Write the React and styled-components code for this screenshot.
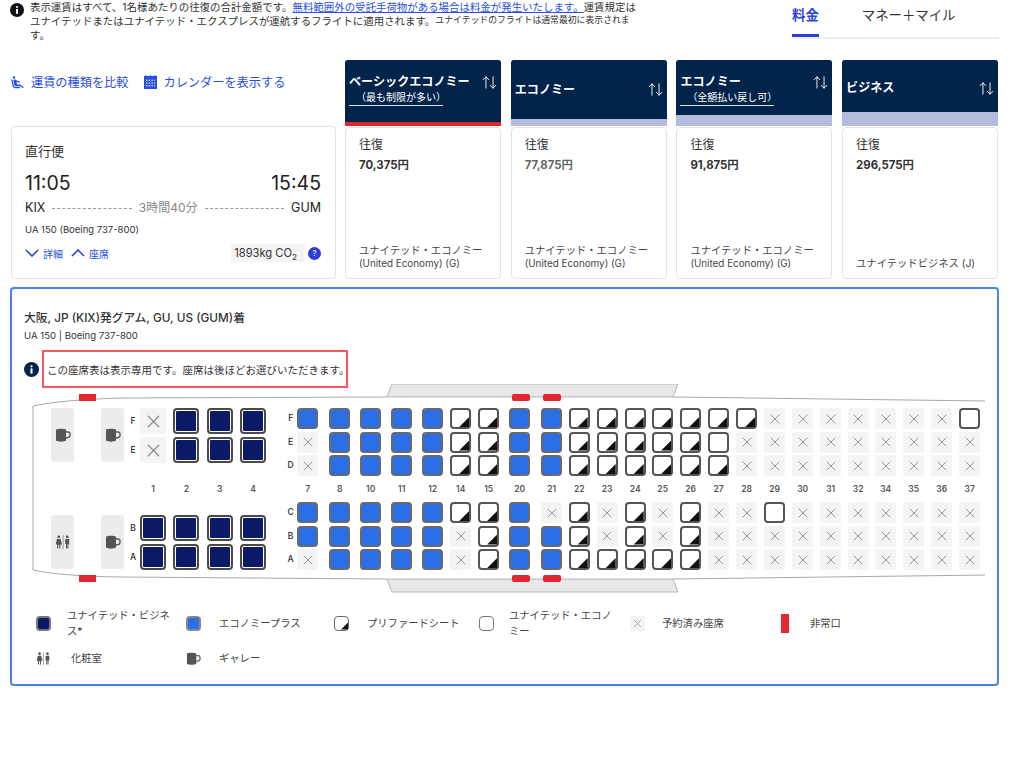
import React from "react";
import styled, { createGlobalStyle } from "styled-components";
import { MdAirlineSeatReclineExtra } from "react-icons/md";
import { ArrowUpDown, X } from "lucide-react";

const Global = createGlobalStyle`
  html, body { margin: 0; padding: 0; background: #fff; }
  body { font-family: Inter, "Noto Sans CJK JP", sans-serif; color: #333; width: 1024px; height: 768px; overflow: hidden; }
`;

const Page = styled.div`
  width: 989px;
  padding-left: 10px;
`;
const Top = styled.div`
  display: flex;
  justify-content: space-between;
  height: 60px;
`;
const Notice = styled.div`
  display: flex;
  gap: 6px;
  width: 640px;
  padding-top: 1px;
  font-size: 10.45px;
  line-height: 14px;
  color: #333;
`;
const NoticeIcon = styled.svg`
  flex: none;
  width: 14px;
  height: 14px;
  margin-top: 2px;
`;
const NoticeLink = styled.a`
  color: #2a4fe0;
  text-decoration: underline;
`;
const SmallNote = styled.span`
  font-size: 8.85px;
  line-height: 0;
  vertical-align: 2.5px;
`;
const Tabs = styled.div`
  display: flex;
  width: 207px;
  height: 37px;
  gap: 43px;
  border-bottom: 2px solid #eeeef0;
`;
const Tab = styled.div`
  font-size: 13.4px;
  line-height: 30px;
  height: 37px;
  box-sizing: border-box;
  color: ${p => (p.$active ? "#2a45d8" : "#333")};
  font-weight: ${p => (p.$active ? 600 : 400)};
  border-bottom: ${p => (p.$active ? "3px solid #2a3fd8" : "none")};
`;
const Middle = styled.div`
  display: flex;
  gap: 10px;
`;
const LeftCol = styled.div`
  width: 325px;
  margin-left: 1px;
  flex: none;
  margin-right: -1px;
`;
const Links = styled.div`
  height: 66px;
  display: flex;
  align-items: center;
  padding-bottom: 22px;
  box-sizing: border-box;
  margin-left: -1px;
`;
const TopLink = styled.a`
  display: flex;
  align-items: center;
  gap: 6px;
  font-size: 12.2px;
  color: #2a4fe0;
  margin-right: 14px;
`;
const FlightCard = styled.div`
  box-sizing: border-box;
  height: 153px;
  border: 1px solid #e3e4e8;
  border-radius: 4px;
  padding: 15px 14px 0 13px;
  box-shadow: 0 0 2px rgba(0, 0, 0, 0.06);
`;
const CardTitle = styled.div`
  font-size: 13px;
  line-height: 18px;
`;
const RouteLine = styled.div`
  display: flex;
  justify-content: space-between;
  align-items: center;
`;
const Times = styled(RouteLine)`
  font-size: 19.5px;
  line-height: 24px;
  margin-top: 11px;
  color: #222;
`;
const Airports = styled(RouteLine)`
  font-size: 12.5px;
  line-height: 16px;
  margin-top: 5px;
  color: #222;
  gap: 7px;
`;
const Dash = styled.div`
  flex: 1;
  border-top: 1px dashed #999;
`;
const Duration = styled.span`
  font-size: 12px;
  color: #888;
`;
const Aircraft = styled.div`
  font-size: 9.5px;
  line-height: 14px;
  margin-top: 7px;
`;
const CardBottom = styled(RouteLine)`
  margin-top: 7px;
`;
const DetailLinks = styled.div`
  display: flex;
  align-items: center;
  gap: 8px;
`;
const DetailLink = styled.a`
  display: flex;
  align-items: center;
  gap: 4px;
  font-size: 10px;
  color: #2a4fe0;
`;
const Chevron = styled.svg`
  width: 14px;
  height: 8px;
  fill: none;
  stroke: #2a45d8;
  stroke-width: 1.6;
`;
const Co2Wrap = styled.div`
  display: flex;
  align-items: center;
  gap: 4px;
`;
const Co2 = styled.div`
  background: #f4f4f4;
  font-size: 11.2px;
  line-height: 18px;
  padding: 0 7px 0 3px;
  color: #333;
  white-space: nowrap;
  sub { font-size: 8px; line-height: 0; }
`;
const Help = styled.div`
  width: 13px;
  height: 13px;
  border-radius: 50%;
  background: #2f3fd6;
  color: #fff;
  font-size: 8px;
  line-height: 13px;
  text-align: center;
`;
const Fares = styled.div`
  flex: 1;
  display: grid;
  grid-template-columns: repeat(4, 156px);
  column-gap: 9.7px;
`;
const FareCol = styled.div`
  display: flex;
  flex-direction: column;
`;
const FareHead = styled.div`
  height: 66px;
  background: #b4bbdf;
  border-radius: 3px 3px 0 0;
  overflow: hidden;
  display: flex;
  flex-direction: column;
`;
const FareTop = styled.div`
  height: ${p => p.$h}px;
  background: #02234a;
  color: #fff;
  display: flex;
  justify-content: space-between;
  align-items: ${p => (p.$sub ? "flex-start" : "center")};
  padding: ${p => p.$pt}px 3px 0 4px;
  box-sizing: border-box;
`;
const RedLine = styled.div`
  height: 4px;
  background: #e0252f;
`;
const FareName = styled.div`
  font-size: 12.1px;
  font-weight: 700;
  line-height: 16px;
`;
const FareSub = styled.div`
  font-size: 10px;
  font-weight: 400;
  line-height: 13px;
  padding: 1px 0 1px 7px;
  border-bottom: 1px solid #ddd;
  width: 87px;
`;
const FareBody = styled.div`
  box-sizing: border-box;
  height: 152px;
  margin-top: 1px;
  border: 1px solid #e3e4e8;
  border-radius: 4px;
  padding: 9px 13px 8px 13px;
  display: flex;
  flex-direction: column;
`;
const Trip = styled.div`
  font-size: 12px;
  line-height: 16px;
`;
const Price = styled.div`
  font-size: 11.4px;
  font-weight: 700;
  line-height: 14px;
  margin-top: 5px;
  color: ${p => (p.$muted ? "#666" : "#333")};
`;
const Cabin = styled.div`
  margin-top: auto;
  font-size: 10.3px;
  line-height: 13px;
  color: #444;
  white-space: nowrap;
`;
const CabinCode = styled.div`
  font-size: 9.85px;
`;
const Panel = styled.div`
  box-sizing: border-box;
  height: 399px;
  margin-top: 8px;
  border: 2px solid #4c80ea;
  border-radius: 4px;
`;
const PanelTitle = styled.div`
  font-size: 11.8px;
  font-weight: 500;
  line-height: 16px;
  padding: 21px 0 0 12px;
`;
const PanelSub = styled.div`
  font-size: 9.6px;
  line-height: 14px;
  padding: 3px 0 0 12px;
`;
const InfoRow = styled.div`
  display: flex;
  align-items: center;
  margin: 7px 0 0 12px;
`;
const InfoDot = styled.svg`
  width: 15px;
  height: 15px;
  flex: none;
  margin-right: 4px;
`;
const Callout = styled.div`
  box-sizing: border-box;
  width: 306px;
  height: 38px;
  border: 2px solid #f55a5f;
  padding-left: 3px;
  margin-left: -1px;
  display: flex;
  align-items: center;
  font-size: 10.5px;
  color: #333;
  white-space: nowrap;
`;
const Deck = styled.div`
  position: relative;
  height: 208px;
  margin-top: -4px;
  display: flex;
  padding: 24px 0 0 39px;
  box-sizing: border-box;
`;
const Hull = styled.svg`
  position: absolute;
  left: 0;
  top: 0;
  width: 985px;
  height: 210px;
  z-index: 0;
`;
const Exit = styled.div`
  position: absolute;
  z-index: 1;
  left: ${p => p.$x}px;
  top: ${p => p.$y}px;
  width: ${p => p.$w}px;
  height: 7px;
  border-radius: ${p => (p.$round ? "2px" : "0")};
  background: #e3262f;
`;
const CabinColumn = styled.div`
  position: relative;
  z-index: 1;
  display: flex;
  flex-direction: column;
  width: ${p => p.$w}px;
  margin-left: ${p => p.$ml}px;
  flex: none;
  align-items: center;
`;
const Stack = styled.div`
  display: flex;
  flex-direction: column;
  align-items: center;
  gap: ${p => p.$gap}px;
`;
const NumberCell = styled.div`
  height: ${p => p.$h}px;
  display: flex;
  align-items: center;
  justify-content: center;
  font-size: 8.5px;
  font-weight: 600;
  color: #555;
`;
const RowLetter = styled.div`
  height: ${p => p.$s}px;
  line-height: ${p => p.$s}px;
  font-size: 8.5px;
  font-weight: 600;
  color: #444;
`;
const Facility = styled.div`
  box-sizing: border-box;
  width: 23px;
  height: 54px;
  border-radius: 3px;
  background: #ececec;
  display: flex;
  align-items: center;
  justify-content: center;
`;
const FacilityGap = styled.div`
  height: 53px;
`;
const Seat = styled.div`
  box-sizing: border-box;
  position: relative;
  width: ${p => p.$s}px;
  height: ${p => p.$s}px;
  border-radius: 4px;
  display: flex;
  align-items: center;
  justify-content: center;
  ${p => p.$k === "B" && "border:2px solid #4a4a4a;padding:1px;background:#0a1a66 content-box;"}
  ${p => p.$k === "P" && "border:2px solid #666a70;background:#2a6fe8;"}
  ${p => (p.$k === "R" || p.$k === "O") && "border:2px solid #555;background:#fff;"}
  ${p => p.$k === "X" && "background:#f4f4f4;border-radius:2px;color:#8c8c8c;"}
  ${p =>
    p.$k === "R" &&
    `&::after{content:"";position:absolute;right:0;bottom:0;width:${Math.round(p.$s * 0.48)}px;height:${Math.round(
      p.$s * 0.48
    )}px;background:#111;clip-path:polygon(100% 0,100% 100%,0 100%);}`}
`;
const Swatch = styled(Seat)`
  ${p => p.$k === "B" && "padding:0;background:#0a1a66;border-color:#777;"}
  ${p => p.$k === "P" && "border-color:#888;"}
  ${p => (p.$k === "R" || p.$k === "O") && "border:1px solid #666;"}
  ${p => p.$k === "O" && "border-color:#777;"}
`;
const Legend = styled.div`
  display: grid;
  grid-template-columns: 150px 148px 145px 151px 147px auto;
  grid-auto-rows: 34px;
  padding: 14px 0 0 24px;
  row-gap: 1px;
`;
const LegendItem = styled.div`
  display: flex;
  align-items: center;
  gap: ${p => p.$gap || 16}px;
  font-size: 10.3px;
  line-height: 16px;
  color: #444;
`;
const LegendLabel = styled.div`
  width: 105px;
`;
const IconBox = styled.div`
  width: 15px;
  flex: none;
  display: flex;
  justify-content: center;
`;
const ExitMark = styled.div`
  width: 8px;
  height: 19px;
  background: #e3262f;
`;

function Mug({ size = 16 }) {
  return (
    <svg width={size} height={size} viewBox="0 0 16 16">
      <path d="M1 2.5C3 1.5 9 1.5 11 2.5V13.5C9 15 3 15 1 13.5Z" fill="#555" />
      <path d="M11 5H13A2 2 0 0 1 15 7V8.5A2 2 0 0 1 13 10.5L11 11" fill="none" stroke="#555" strokeWidth="1.3" />
    </svg>
  );
}
function Lav({ size = 16 }) {
  return (
    <svg width={size} height={size} viewBox="0 0 16 16" fill="#555">
      <circle cx="3.8" cy="2.8" r="1.4" />
      <path d="M2 5H5.6L7 10.5H5.4V14.5H4.3V11H3.3V14.5H2.2V10.5H.6Z" />
      <rect x="7.8" y="1" width=".5" height="14" />
      <circle cx="12.2" cy="2.8" r="1.4" />
      <path d="M10.2 5H14.2V10H13.4V14.5H12.4V10.5H12V14.5H11V10H10.2Z" />
    </svg>
  );
}

const economy = [
  ["7", 308, "PXX", "PPX"],
  ["8", 340, "PPP", "PPP"],
  ["10", 371, "PPP", "PPP"],
  ["11", 402, "PPP", "PPP"],
  ["12", 433, "PPP", "PPP"],
  ["14", 461, "RRR", "RXX"],
  ["15", 489, "RRR", "RRR"],
  ["20", 520, "PPP", "PPP"],
  ["21", 552, "PPP", "XPP"],
  ["22", 579.5, "RRR", "RRR"],
  ["23", 607.5, "RRR", "XXR"],
  ["24", 635.5, "RRR", "RRR"],
  ["25", 663, "RRR", "XXR"],
  ["26", 691, "RRR", "RRR"],
  ["27", 719, "ROR", "XXX"],
  ["28", 747, "RXX", "XXX"],
  ["29", 775, "XXX", "OXX"],
  ["30", 803, "XXX", "XXX"],
  ["31", 831, "XXX", "XXX"],
  ["32", 858.5, "XXX", "XXX"],
  ["34", 886, "XXX", "XXX"],
  ["35", 914, "XXX", "XXX"],
  ["36", 942, "XXX", "XXX"],
  ["37", 970, "OXX", "XXX"],
];
const business = [
  ["1", "XX", "BB"],
  ["2", "BB", "BB"],
  ["3", "BB", "BB"],
  ["4", "BB", "BB"],
];

const crossSize = { 26: 21, 21: 16, 15: 13 };

const SeatCell = ({ k, s }) => (
  <Seat $k={k} $s={s}>
    {k === "X" && <X size={crossSize[s]} strokeWidth={1.35} />}
  </Seat>
);

const fares = [
  { name: "ベーシックエコノミー", sub: "（最も制限が多い）", h: 62, pt: 14, red: true, price: "70,375円", c1: "ユナイテッド・エコノミー", c2: "(United Economy) (G)" },
  { name: "エコノミー", h: 59, pt: 0, price: "77,875円", muted: true, c1: "ユナイテッド・エコノミー", c2: "(United Economy) (G)" },
  { name: "エコノミー", sub: "（全額払い戻し可）", h: 55, pt: 14, price: "91,875円", c1: "ユナイテッド・エコノミー", c2: "(United Economy) (G)" },
  { name: "ビジネス", h: 52, pt: 4, price: "296,575円", c1: "ユナイテッドビジネス (J)" },
];

const Info = ({ as: C, fill }) => (
  <C viewBox="0 0 16 16">
    <circle cx="8" cy="8" r="8" fill={fill} />
    <circle cx="8" cy="4.6" r="1.2" fill="#fff" />
    <rect x="6.9" y="6.8" width="2.2" height="5.6" fill="#fff" />
  </C>
);

export default function App() {
  return (
    <Page>
      <Global />
      <Top>
        <Notice>
          <Info as={NoticeIcon} fill="#111" />
          <div>
            表示運賃はすべて、1名様あたりの往復の合計金額です。
            <NoticeLink>無料範囲外の受託手荷物がある場合は料金が発生いたします。</NoticeLink>
            運賃規定は
            <br />
            ユナイテッドまたはユナイテッド・エクスプレスが運航するフライトに適用されます。
            <SmallNote>ユナイテッドのフライトは通常最初に表示されま</SmallNote>
            <br />
            す。
          </div>
        </Notice>
        <Tabs>
          <Tab $active>料金</Tab>
          <Tab>マネー＋マイル</Tab>
        </Tabs>
      </Top>
      <Middle>
        <LeftCol>
          <Links>
            <TopLink>
              <MdAirlineSeatReclineExtra size={15} />
              運賃の種類を比較
            </TopLink>
            <TopLink>
              <svg width="15" height="15" viewBox="0 0 15 15">
                <rect x="1" y="1" width="13" height="13" fill="#2a4fe0" />
                <path d="M3 .2V2M7.5 .2V2M12 .2V2" stroke="#2a4fe0" strokeWidth="1.2" />
                <path d="M3 5.2H12M3 8H12M3 10.8H12" stroke="#fff" strokeWidth="1.1" strokeDasharray="1.5 1.2" />
              </svg>
              カレンダーを表示する
            </TopLink>
          </Links>
          <FlightCard>
            <CardTitle>直行便</CardTitle>
            <Times>
              <span>11:05</span>
              <span>15:45</span>
            </Times>
            <Airports>
              <span>KIX</span>
              <Dash />
              <Duration>3時間40分</Duration>
              <Dash />
              <span>GUM</span>
            </Airports>
            <Aircraft>UA 150 (Boeing 737-800)</Aircraft>
            <CardBottom>
              <DetailLinks>
                <DetailLink>
                  <Chevron viewBox="0 0 14 8"><path d="M1 1L7 7L13 1" /></Chevron>
                  詳細
                </DetailLink>
                <DetailLink>
                  <Chevron viewBox="0 0 14 8"><path d="M1 7L7 1L13 7" /></Chevron>
                  座席
                </DetailLink>
              </DetailLinks>
              <Co2Wrap>
                <Co2>
                  1893kg CO<sub>2</sub>
                </Co2>
                <Help>?</Help>
              </Co2Wrap>
            </CardBottom>
          </FlightCard>
        </LeftCol>
        <Fares>
          {fares.map((f, i) => (
            <FareCol key={i}>
              <FareHead>
                <FareTop $h={f.h} $sub={!!f.sub} $pt={f.pt}>
                  <div>
                    <FareName>{f.name}</FareName>
                    {f.sub && <FareSub>{f.sub}</FareSub>}
                  </div>
                  <ArrowUpDown size={17} strokeWidth={1.3} />
                </FareTop>
                {f.red && <RedLine />}
              </FareHead>
              <FareBody>
                <Trip>往復</Trip>
                <Price $muted={f.muted}>{f.price}</Price>
                <Cabin>
                  {f.c1}
                  {f.c2 && <CabinCode>{f.c2}</CabinCode>}
                </Cabin>
              </FareBody>
            </FareCol>
          ))}
        </Fares>
      </Middle>
      <Panel>
        <PanelTitle>大阪, JP (KIX)発グアム, GU, US (GUM)着</PanelTitle>
        <PanelSub>UA 150 | Boeing 737-800</PanelSub>
        <InfoRow>
          <Info as={InfoDot} fill="#02234a" />
          <Callout>この座席表は表示専用です。座席は後ほどお選びいただきます。</Callout>
        </InfoRow>
        <Deck>
          <Hull viewBox="12 384 985 210">
            <path d="M387 397L392 384H678L673 397Z" fill="#e8e8e8" stroke="#b5b5b5" strokeWidth="1" />
            <path d="M387 579L392 592H678L673 579Z" fill="#e8e8e8" stroke="#b5b5b5" strokeWidth="1" />
            <path
              d="M985 401L673 397M387 397L120 398Q60 400 33 406V570Q60 576 120 577L387 579M673 579L985 575"
              fill="none"
              stroke="#a8a8a8"
              strokeWidth="1"
            />
          </Hull>
          <Exit $x={67} $y={10} $w={17} />
          <Exit $x={67} $y={191} $w={17} />
          <Exit $x={500} $y={10} $w={18} $round />
          <Exit $x={531} $y={10} $w={18} $round />
          <Exit $x={500} $y={191} $w={18} $round />
          <Exit $x={531} $y={191} $w={18} $round />

          <CabinColumn $w={23} $ml={0}>
            <Facility><Mug size={16} /></Facility>
            <FacilityGap />
            <Facility><Lav size={16} /></Facility>
          </CabinColumn>
          <CabinColumn $w={23} $ml={27}>
            <Facility><Mug size={16} /></Facility>
            <FacilityGap />
            <Facility><Mug size={16} /></Facility>
          </CabinColumn>

          <CabinColumn $w={18} $ml={0}>
            <Stack $gap={3}>
              <RowLetter $s={26}>F</RowLetter>
              <RowLetter $s={26}>E</RowLetter>
            </Stack>
            <NumberCell $h={52} />
            <Stack $gap={3}>
              <RowLetter $s={26}>B</RowLetter>
              <RowLetter $s={26}>A</RowLetter>
            </Stack>
          </CabinColumn>
          {business.map(([n, up, low], i) => (
            <CabinColumn key={n} $w={26} $ml={i === 0 ? -2 : 7.33}>
              <Stack $gap={3}>
                {[...up].map((k, j) => <SeatCell key={j} k={k} s={26} />)}
              </Stack>
              <NumberCell $h={52}>{n}</NumberCell>
              <Stack $gap={3}>
                {[...low].map((k, j) => <SeatCell key={j} k={k} s={26} />)}
              </Stack>
            </CabinColumn>
          ))}

          <CabinColumn $w={14} $ml={17.7}>
            <Stack $gap={2.5}>
              {["F", "E", "D"].map(l => <RowLetter key={l} $s={21}>{l}</RowLetter>)}
            </Stack>
            <NumberCell $h={26} />
            <Stack $gap={2.5}>
              {["C", "B", "A"].map(l => <RowLetter key={l} $s={21}>{l}</RowLetter>)}
            </Stack>
          </CabinColumn>
          {economy.map(([n, x, up, low], i) => (
            <CabinColumn key={n} $w={21} $ml={i === 0 ? -0.5 : x - economy[i - 1][1] - 21}>
              <Stack $gap={2.5}>
                {[...up].map((k, j) => <SeatCell key={j} k={k} s={21} />)}
              </Stack>
              <NumberCell $h={26}>{n}</NumberCell>
              <Stack $gap={2.5}>
                {[...low].map((k, j) => <SeatCell key={j} k={k} s={21} />)}
              </Stack>
            </CabinColumn>
          ))}
        </Deck>
        <Legend>
          <LegendItem $gap={16}><IconBox><Swatch $k="B" $s={15} /></IconBox><LegendLabel>ユナイテッド・ビジネス*</LegendLabel></LegendItem>
          <LegendItem $gap={18}><IconBox><Swatch $k="P" $s={15} /></IconBox><LegendLabel>エコノミープラス</LegendLabel></LegendItem>
          <LegendItem $gap={18}><IconBox><Swatch $k="R" $s={15} /></IconBox><LegendLabel>プリファードシート</LegendLabel></LegendItem>
          <LegendItem $gap={15}><IconBox><Swatch $k="O" $s={15} /></IconBox><LegendLabel>ユナイテッド・エコノミー</LegendLabel></LegendItem>
          <LegendItem $gap={17}><IconBox><SeatCell k="X" s={15} /></IconBox><LegendLabel>予約済み座席</LegendLabel></LegendItem>
          <LegendItem $gap={18}><IconBox><ExitMark /></IconBox><LegendLabel>非常口</LegendLabel></LegendItem>
          <LegendItem $gap={20}><IconBox><Lav size={15} /></IconBox><LegendLabel>化粧室</LegendLabel></LegendItem>
          <LegendItem $gap={18}><IconBox><Mug size={15} /></IconBox><LegendLabel>ギャレー</LegendLabel></LegendItem>
        </Legend>
      </Panel>
    </Page>
  );
}
